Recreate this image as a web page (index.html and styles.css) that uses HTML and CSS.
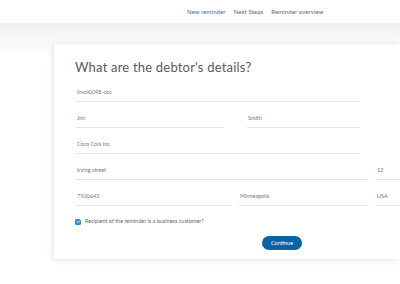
FILE: index.html
```html
<!DOCTYPE html>
<html lang="en">
	<head>
		<meta charset="UTF-8" />
		<meta name="viewport" content="width=device-width, initial-scale=1.0" />
		<title>New reminder</title>
		<link rel="stylesheet" href="styles.css">
	</head>
	<body>
		<header class="topbar">
			<nav class="nav">
				<a class="nav-link active" href="#">New reminder</a>
				<a class="nav-link" href="#">Next Steps</a>
				<a class="nav-link" href="#">Reminder overview</a>
			</nav>
		</header>

		<main class="main">
			<div class="card">
				<h1 class="title">What are the debtor's details?</h1>

				<form class="form">
					<div class="row">
						<div class="field w-full">Invoi0098-coc</div>
					</div>
					<div class="row">
						<div class="field w-first">Jim</div>
						<div class="field w-last">Smith</div>
					</div>
					<div class="row">
						<div class="field w-full">Coca Cola Inc</div>
					</div>
					<div class="row">
						<div class="field w-street">Irving street</div>
						<div class="field w-side">12</div>
					</div>
					<div class="row">
						<div class="field w-zip">7500645</div>
						<div class="field w-city">Minneapolis</div>
						<div class="field w-side">USA</div>
					</div>

					<label class="check">
						<span class="check-box">
							<svg viewBox="0 0 10 10" width="5" height="5"><path d="M2 5.2 L4.2 7.3 L8 2.8" fill="none" stroke="#fff" stroke-width="1.6" stroke-linecap="round" stroke-linejoin="round"/></svg>
						</span>
						Recipient of the reminder is a business customer?
					</label>

					<div class="actions">
						<button type="button" class="btn">Continue</button>
					</div>
				</form>
			</div>
		</main>
	</body>
</html>
```

FILE: styles.css
```css
html, body {
	margin: 0;
	padding: 0;
	overflow: hidden;
}
body {
	font-family: Lato, "Open Sans", Arial, sans-serif;
	color: #666;
	background: #fff;
	width: 400px;
	height: 284px;
}
.topbar {
	height: 23px;
	background: #fff;
	display: flex;
	align-items: center;
}
.nav {
	display: flex;
	gap: 8px;
	margin-left: 187px;
}
.nav-link {
	font-size: 6px;
	color: #666;
	text-decoration: none;
	letter-spacing: 0.1px;
}
.nav-link.active {
	color: #2b6e9c;
}
.main {
	background: linear-gradient(#eef1f4 0px, #f6f7f9 14px, #fff 34px);
	padding: 21px 0 0 54px;
}
.card {
	width: 346px;
	background: #fff;
	border-radius: 3px 0 0 3px;
	box-shadow: -1px 1px 6px rgba(0, 0, 0, 0.12);
	padding: 15px 0 9px 21px;
	box-sizing: border-box;
	overflow: hidden;
}
.title {
	margin: 0 0 1px;
	font-size: 13px;
	font-weight: 400;
	color: #5a5a5a;
	letter-spacing: 0.2px;
	line-height: 16px;
}
.row {
	display: flex;
	height: 26px;
	align-items: flex-end;
}
.field {
	font-size: 5.5px;
	color: #777;
	border-bottom: 1px solid #e4e6e9;
	padding: 0 0 5px 2px;
	box-sizing: border-box;
	line-height: 7px;
	flex-shrink: 0;
}
.w-full { width: 285px; }
.w-first { width: 149px; margin-right: 23px; }
.w-last { width: 113px; padding-left: 1px; }
.w-street { width: 293px; margin-right: 7px; }
.w-side { width: 25px; }
.w-zip { width: 157px; margin-right: 6px; }
.w-city { width: 130px; margin-right: 7px; }
.check {
	display: flex;
	align-items: center;
	gap: 4px;
	margin-top: 12px;
	font-size: 5.5px;
	color: #666;
	line-height: 7px;
}
.check-box {
	width: 6px;
	height: 6px;
	border-radius: 1.5px;
	background: #2d8cd3;
	display: flex;
	align-items: center;
	justify-content: center;
}
.actions {
	margin-top: 4px;
	padding-left: 187px;
}
.btn {
	width: 40px;
	height: 14px;
	border: none;
	border-radius: 7px;
	background: #0b63a6;
	color: #fff;
	font-family: inherit;
	font-size: 5.5px;
	padding: 0;
}
```
